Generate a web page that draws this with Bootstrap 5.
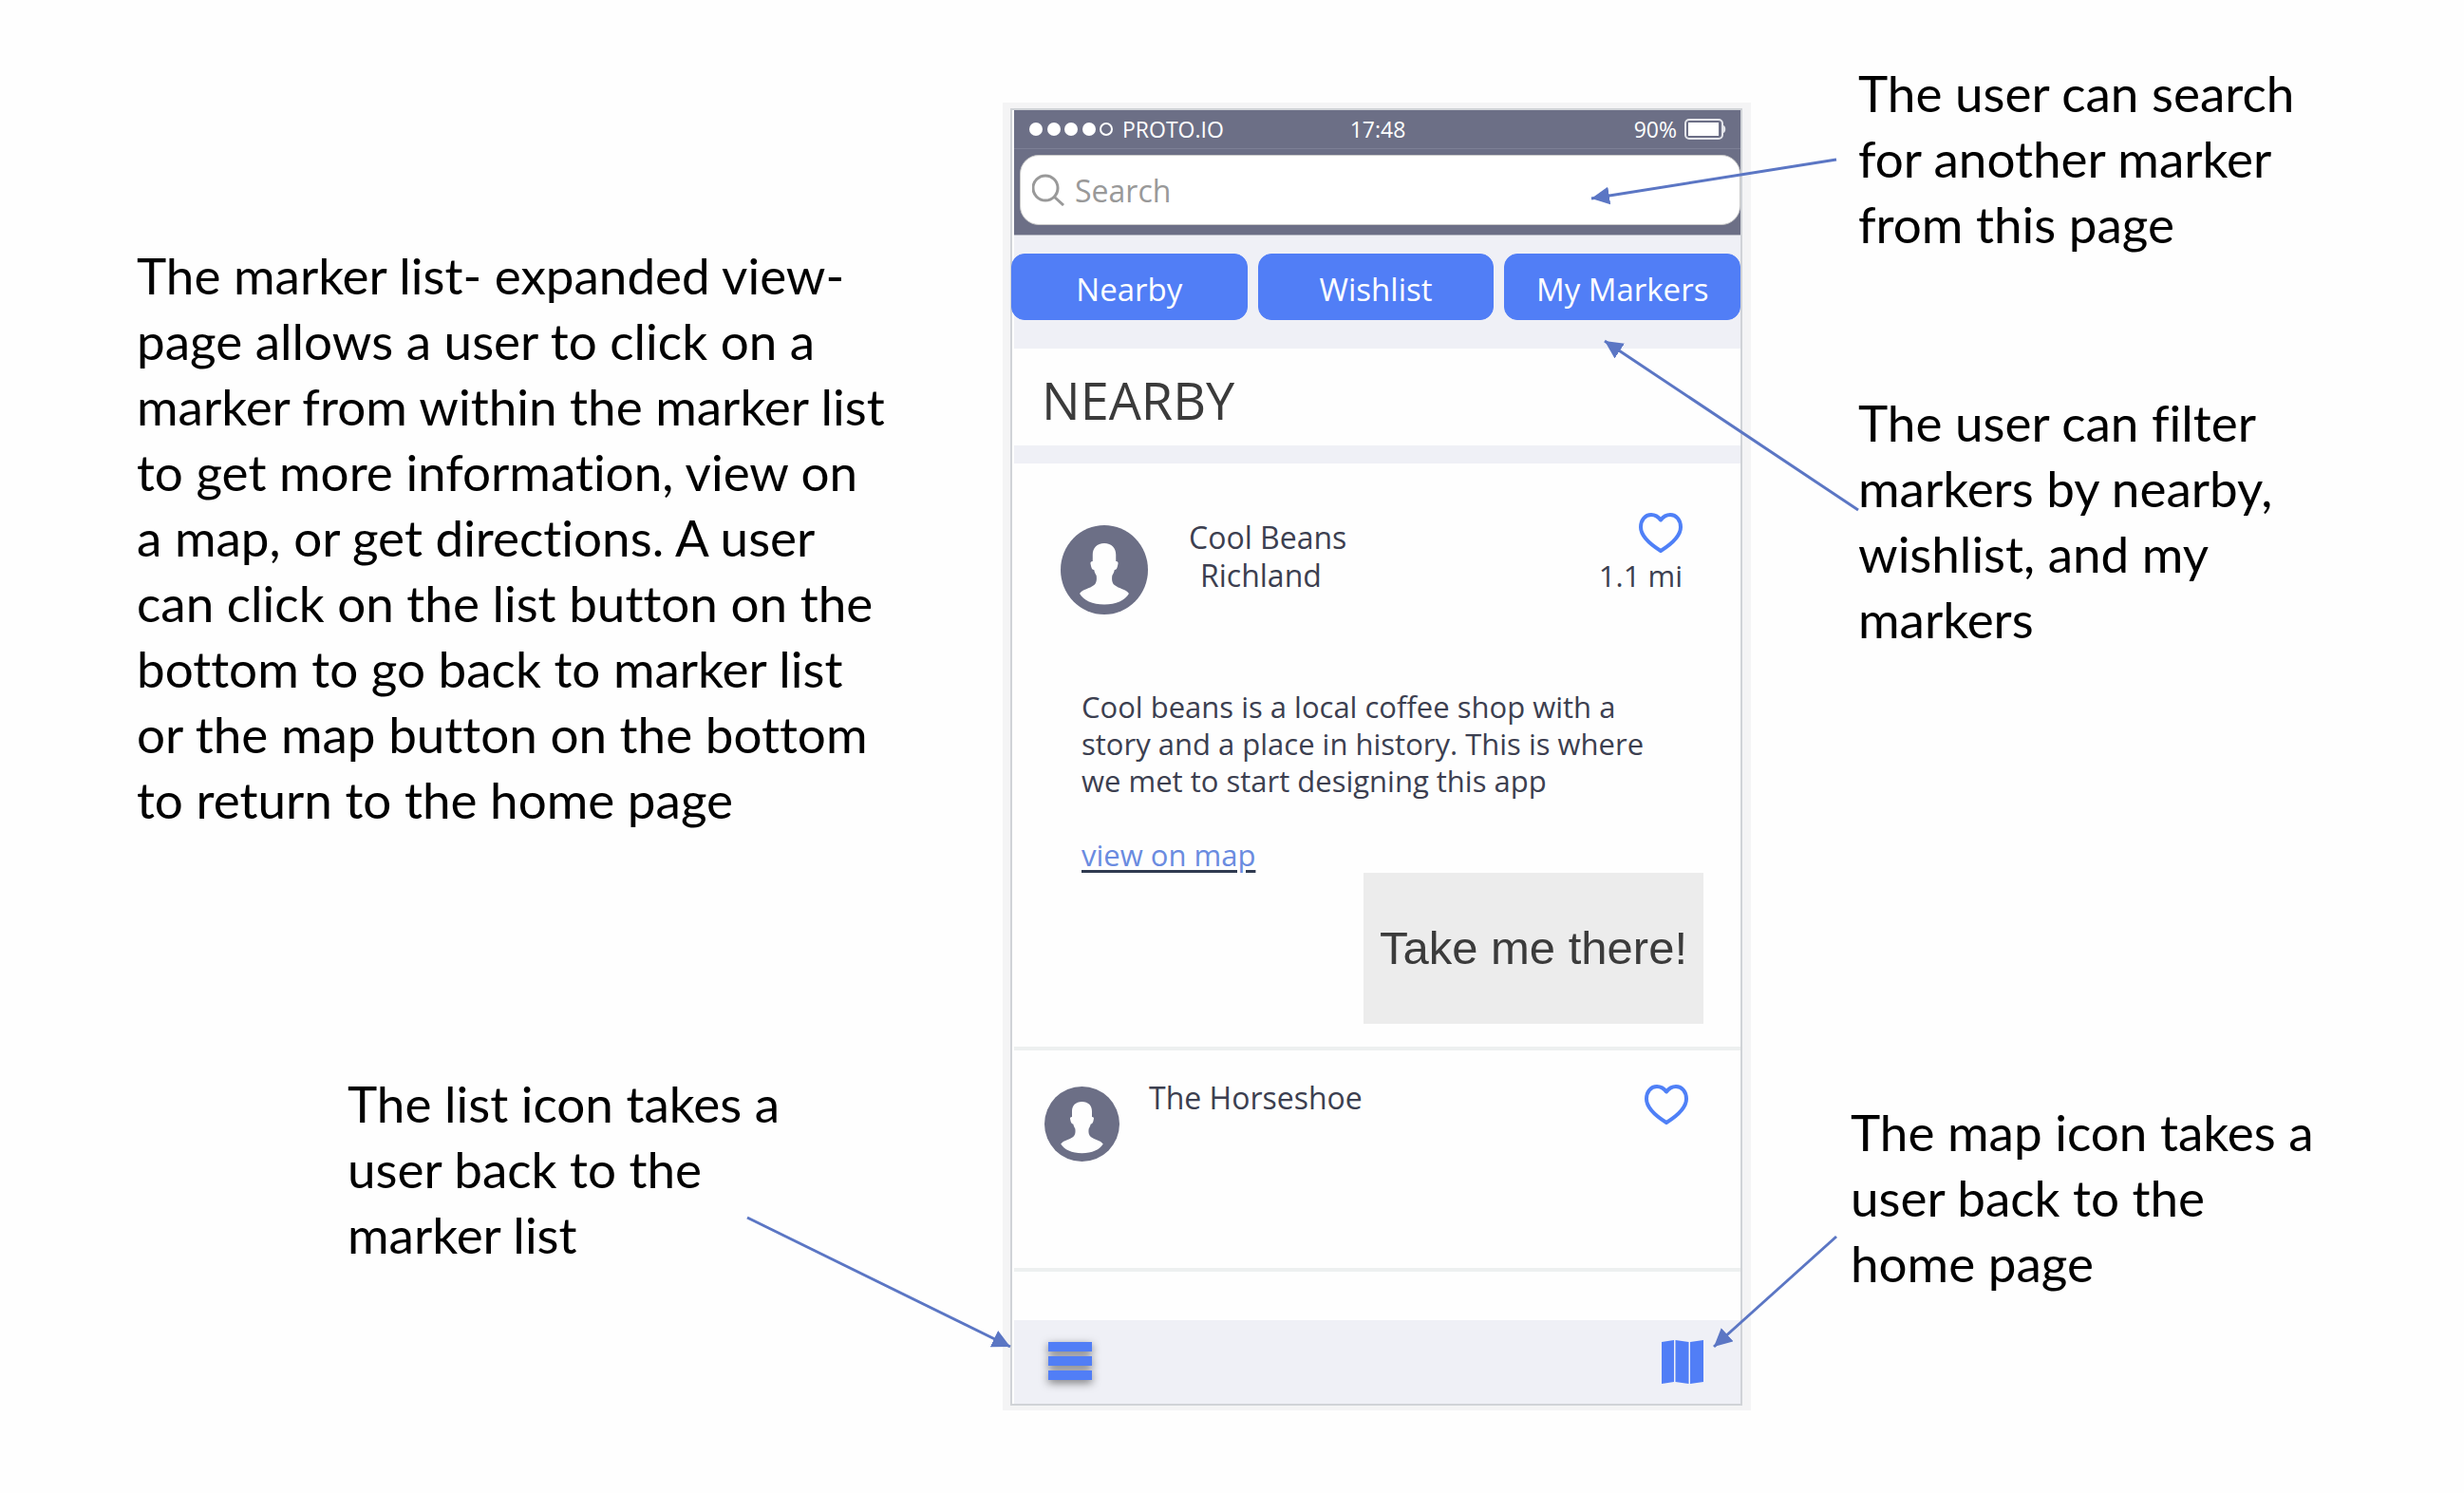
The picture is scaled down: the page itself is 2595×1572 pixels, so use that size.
<!DOCTYPE html>
<html lang="en">
<head>
<meta charset="utf-8">
<meta name="viewport" content="width=device-width, initial-scale=1">
<title>Marker list - expanded view</title>
<link href="https://cdn.jsdelivr.net/npm/bootstrap@5.3.0/dist/css/bootstrap.min.css" rel="stylesheet">
<style>
  body { background: #fefefe; color: #000; font-family: Lato, "Liberation Sans", sans-serif; }
  .board { display: grid; grid-template-columns: 1056fr 788fr 751fr; min-height: 100vh; align-items: start; }
  .note { font-size: 53px; line-height: 69px; margin: 0; font-variant-ligatures: none; }
  .notes-left { padding: 255px 108px 0 144px; gap: 251px; }
  .notes-left .note-list { margin-left: 222px; max-width: 500px; }
  .notes-right { padding: 63px 90px 0 105px; }
  .note-search, .note-filter { margin-left: 8px; max-width: 480px; }
  .note-filter { margin-top: 140px; }
  .note-map { margin-top: 471px; max-width: 505px; }

  .arrows { pointer-events: none; }

  .phone-frame { margin-top: 108px; padding: 6px 9px 5px 8px; background: #f4f4f5; }
  .phone { border: 2px solid #d0d3d7; padding-left: 2px; background: #fefefe; font-family: "Open Sans", "Noto Sans", sans-serif; font-size: 32px; line-height: 40px; color: #3c3f50; }
  .phone-head { background: #6c6f86; border-bottom: 1px solid #b4b7c2; color: #fff; }
  .status { height: 41px; padding: 0 15px 0 16px; font-size: 23px; line-height: 30px; border-bottom: 1px solid #7c7f95; }
  .search-area { padding: 6px 0 10px 6px; }
  .search-box { height: 74px; border: 1px solid #c9c9c9; border-radius: 20px; background: #fff; padding: 0 12px; gap: 11px; }
  .search-box input { border: 0; outline: 0; background: transparent; min-width: 0; flex: 1; padding: 2px 0 0; font-size: 32px; color: #444; }
  .search-box input::placeholder { color: #999; opacity: 1; }
  .filters { background: #eff0f6; padding: 19px 0 30px; }
  .filter-row { gap: 11px; margin-left: -3px; }
  .btn-filter { --bs-btn-bg: #517ef6; --bs-btn-color: #fff; --bs-btn-border-color: #517ef6; --bs-btn-hover-bg: #3f6ce4; --bs-btn-hover-color: #fff; flex: 1 1 0; height: 70px; border-radius: 14px; font-size: 33px; line-height: 40px; padding: 6px 0 0; white-space: nowrap; }
  .section-title { font-size: 54px; line-height: 74px; font-weight: 400; color: #3b3b3b; margin: 0; padding: 17px 29px 11px; }
  .band { height: 19px; background: #eff0f6; }
  .place { border-bottom: 4px solid #edf0f0; }
  .place-open { padding: 52px 39px 24px 49px; }
  .place-open .top { padding-right: 22px; }
  .place-open .avatar { width: 92px; height: 94px; margin: 13px 43px 0 0; }
  .place-name { padding-top: 6px; }
  .distance { font-size: 31px; }
  .blurb { margin: 78px 0 0 22px; font-size: 31px; line-height: 39px; max-width: 640px; }
  .map-row { margin: 39px 0 0 22px; font-size: 31px; line-height: 38px; }
  .map-link { color: #6a8be0; text-decoration-color: #2f3a50; text-decoration-thickness: 3px; text-underline-offset: 4px; }
  .btn-take { background: #ececec; color: #3b3b3b; border: 0; border-radius: 0; width: 358px; height: 159px; padding: 0; font-family: "Liberation Sans", Arial, sans-serif; font-size: 49px; white-space: nowrap; }
  .place-closed { min-height: 233px; padding: 30px 55px 0 32px; }
  .place-closed .avatar { width: 79px; height: 79px; margin: 8px 31px 0 0; }
  .place-closed .like { margin-top: 6px; }
  .plain { border: 0; background: none; padding: 0; display: block; line-height: 0; }
  .phone-foot { margin-top: 51px; height: 88px; background: #eff0f6; padding: 21px 39px 0 36px; }
  .list-icon { filter: drop-shadow(0 3px 5px rgba(0,0,0,.5)); overflow: visible; }
</style>
</head>
<body>
<svg class="d-none" aria-hidden="true">
  <symbol id="person" viewBox="0 0 94 94" preserveAspectRatio="none">
    <circle cx="47" cy="47" r="47" fill="#6c6f86"/>
    <path fill="#fefefe" d="M47 19c-8 0-12.500 5-12.500 12v7c-2 0-3 1-2 4 .5 3 1.500 5 3.500 5 .6 3 1.500 4 2.500 6 .6 4 .2 8-2.500 10-5 4-12 4-15.500 9 4 7 14 11.500 26.500 11.500S69.500 79 73.500 72c-3.500-5-10.500-5-15.500-9-2.700-2-3.100-6-2.500-10 1-2 1.900-3 2.500-6 2 0 3-2 3.500-5 1-3 0-4-2-4v-7c0-7-4.500-12-12.500-12z"/>
  </symbol>
  <symbol id="heart" viewBox="0 0 46 42">
    <path fill="none" stroke="#4f80f7" stroke-width="4" stroke-linejoin="round" d="M23 7.500C20 3.500 17 2 13 2 6.500 2 2 7.500 2 15c0 9.500 9 17.500 21 25 12-7.500 21-15.500 21-25 0-7.500-4.500-13-11-13-4 0-7 1.500-10 5.500z"/>
  </symbol>
</svg>

<main class="board position-relative">
  <section class="notes-left d-flex flex-column">
    <p class="note">The marker list- expanded view- page allows a user to click on a marker from within the marker list to get more information, view on a&nbsp;map, or get directions. A user can click on the list button on the bottom to go back to marker list or&nbsp;the map button on the bottom to&nbsp;return to the home page</p>
    <p class="note note-list">The list icon takes a user back to the marker list</p>
  </section>

  <div class="phone-frame">
    <div class="phone">
      <header class="phone-head">
        <div class="status row g-0 align-items-center">
          <div class="col d-flex align-items-center gap-2">
            <svg width="90" height="16" viewBox="0 0 90 16" aria-hidden="true">
              <g fill="#fff"><circle cx="7" cy="8" r="7"/><circle cx="26" cy="8" r="7"/><circle cx="44" cy="8" r="7"/><circle cx="63" cy="8" r="7"/></g>
              <circle cx="81" cy="8" r="6" fill="none" stroke="#fff" stroke-width="2"/>
            </svg>
            <span>PROTO.IO</span>
          </div>
          <div class="col-auto">17:48</div>
          <div class="col d-flex align-items-center justify-content-end gap-2">
            <span>90%</span>
            <svg width="44" height="22" viewBox="0 0 44 22" aria-hidden="true">
              <rect x="1" y="1" width="39" height="20" rx="4" fill="none" stroke="#e4e5ea" stroke-width="2"/>
              <rect x="4" y="4" width="32" height="14" fill="#fff"/>
              <path d="M41 7c3 1 3 7 0 8z" fill="#e4e5ea"/>
            </svg>
          </div>
        </div>
        <div class="search-area">
          <div class="search-box d-flex align-items-center">
            <label for="search" aria-label="Search">
              <svg class="d-block" width="34" height="34" viewBox="0 0 34 34" fill="none" stroke="#999" stroke-width="3" aria-hidden="true"><circle cx="14" cy="15" r="13"/><path d="M23 24l10 9"/></svg>
            </label>
            <input id="search" type="search" placeholder="Search">
          </div>
        </div>
      </header>

      <nav class="filters">
        <div class="filter-row d-flex">
          <button type="button" class="btn btn-filter">Nearby</button>
          <button type="button" class="btn btn-filter">Wishlist</button>
          <button type="button" class="btn btn-filter">My Markers</button>
        </div>
      </nav>

      <h1 class="section-title">NEARBY</h1>
      <div class="band"></div>

      <article class="place place-open">
        <div class="top d-flex align-items-start">
          <svg class="avatar" aria-hidden="true"><use href="#person"/></svg>
          <div class="place-name flex-grow-1">
            <div>Cool Beans</div>
            <div class="ms-2 ps-1">Richland</div>
          </div>
          <div class="d-flex flex-column align-items-end gap-1">
            <button type="button" class="plain" aria-label="Like Cool Beans"><svg width="46" height="42"><use href="#heart"/></svg></button>
            <div class="distance">1.1 mi</div>
          </div>
        </div>
        <p class="blurb">Cool beans is a local coffee shop with a story and a place in history. This is where we met to start designing this app</p>
        <div class="map-row"><a class="map-link" href="#map">view on map</a></div>
        <div class="d-flex justify-content-end">
          <button type="button" class="btn btn-take">Take me there!</button>
        </div>
      </article>

      <article class="place place-closed d-flex align-items-start">
        <svg class="avatar" aria-hidden="true"><use href="#person"/></svg>
        <div class="flex-grow-1">The Horseshoe</div>
        <button type="button" class="plain like" aria-label="Like The Horseshoe"><svg width="46" height="42"><use href="#heart"/></svg></button>
      </article>

      <footer class="phone-foot d-flex justify-content-between align-items-start">
        <button type="button" class="plain" aria-label="Marker list">
          <svg class="list-icon" width="46" height="46" viewBox="0 0 46 46" fill="#517ef6"><path d="M0 2h46v10H0zM0 17h46v10H0zM0 32h46v10H0z"/></svg>
        </button>
        <button type="button" class="plain" aria-label="Map">
          <svg width="44" height="46" viewBox="0 0 44 46" fill="#517ef6"><path d="M0 2L13 0v44L0 46zM14.500 0L28.500 2v44l-14-2zM30 2L44 0v44l-14 2z"/></svg>
        </button>
      </footer>
    </div>
  </div>

  <section class="notes-right">
    <p class="note note-search">The user can search for another marker from this page</p>
    <p class="note note-filter">The user can filter markers by nearby, wishlist, and my markers</p>
    <p class="note note-map">The map icon takes a user back to the home page</p>
  </section>

  <svg class="arrows position-absolute top-0 start-0 w-100 h-100" viewBox="0 0 2595 1572" preserveAspectRatio="none" aria-hidden="true">
    <defs>
      <marker id="tip" viewBox="0 0 18 18" refX="18" refY="9" markerWidth="19" markerHeight="19" markerUnits="userSpaceOnUse" orient="auto"><path d="M0 0L18 9L0 18z" fill="#5b76c4"/></marker>
    </defs>
    <g stroke="#5b76c4" stroke-width="3">
      <path d="M1934 168L1676 209" marker-end="url(#tip)"/>
      <path d="M1957 537L1690 359" marker-end="url(#tip)"/>
      <path d="M787 1282L1064 1418" marker-end="url(#tip)"/>
      <path d="M1934 1302L1805 1418" marker-end="url(#tip)"/>
    </g>
  </svg>
</main>
<script src="https://cdn.jsdelivr.net/npm/bootstrap@5.3.0/dist/js/bootstrap.bundle.min.js"></script>
</body>
</html>
